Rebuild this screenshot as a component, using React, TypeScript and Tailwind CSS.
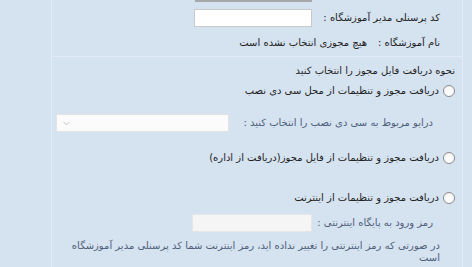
import { ChevronDown } from "lucide-react";

const font = { fontFamily: '"DejaVu Sans", Tahoma, sans-serif' };

function Radio({ label }: { label: string }) {
  return (
    <div className="flex items-center gap-[4px] pr-[7px]">
      <span className="w-[12px] h-[12px] rounded-full border border-[#8a8a8a] bg-white shadow-inner" />
      <span className="text-[#222]">{label}</span>
    </div>
  );
}

export default function App() {
  return (
    <div dir="rtl" className="w-[472px] h-[267px] overflow-hidden bg-[#d5e2f0] text-[10px] leading-none" style={font}>
      <div className="mr-[9px] w-[412px] h-full border-x border-[#e3ecf6]">
        <div className="h-[57px] border-b border-[#e3ecf6] relative">
          <div className="absolute top-0 left-[143px] w-[117px] h-[2px] bg-[#a8a8a8]" />
          <div className="flex items-center pr-[22px] pt-[9px] gap-[8px]">
            <span className="w-[120px] shrink-0 whitespace-nowrap text-[#222]">کد پرسنلی مدیر آموزشگاه :</span>
            <div className="w-[118px] h-[18px] bg-white border border-[#c9c9c9]" />
          </div>
          <div className="flex items-center pr-[22px] pt-[11px] gap-[10px]">
            <span className="w-[63px] shrink-0 whitespace-nowrap text-[#222]">نام آموزشگاه :</span>
            <span className="text-[#222] whitespace-nowrap">هیچ مجوزی انتخاب نشده است</span>
          </div>
        </div>
        <div className="pt-[9px]">
          <div className="pr-[7px] text-[#1f1f1f]">نحوه دریافت فایل مجوز را انتخاب کنید</div>
          <div className="mt-[9px]">
            <Radio label="دریافت مجوز و تنظیمات از محل سی دی نصب" />
          </div>
          <div className="flex items-center mt-[17px] pr-[29px] gap-[14px]">
            <span className="w-[190px] shrink-0 text-[#4f5f7a] whitespace-nowrap">درایو مربوط به سی دی نصب را انتخاب کنید :</span>
            <div className="w-[173px] h-[18px] bg-[#fbfbfb] border border-[#e3e3e3] flex items-center justify-end pl-[4px]">
              <ChevronDown size={11} strokeWidth={1.5} className="text-[#b0b0b0]" />
            </div>
          </div>
          <div className="mt-[20px]">
            <Radio label="دریافت مجوز و تنظیمات از فایل مجوز(دریافت از  اداره)" />
          </div>
          <div className="mt-[28px]">
            <Radio label="دریافت مجوز و تنظیمات از اینترنت" />
          </div>
          <div className="flex items-center mt-[10px] pr-[29px] gap-[8px]">
            <span className="w-[113px] shrink-0 text-[#4f5f7a] whitespace-nowrap">رمز ورود به پایگاه اینترنتی :</span>
            <div className="w-[120px] h-[18px] bg-[#f5f5f5] border border-[#e6e6e6]" />
          </div>
          <div className="mt-[8px] pr-[22px] pl-[10px] text-[#4f5f7a] leading-[12px]">
            در صورتی که رمز اینترنتی را تغییر نداده اید، رمز اینترنت شما کد پرسنلی مدیر آموزشگاه است
          </div>
        </div>
      </div>
    </div>
  );
}
